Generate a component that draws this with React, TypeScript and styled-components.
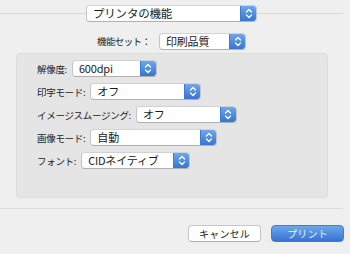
import React from "react";
import styled, { createGlobalStyle } from "styled-components";

const GlobalStyle = createGlobalStyle`
  html, body {
    margin: 0;
    padding: 0;
    background: #efefef;
  }
  body {
    font-family: "Noto Sans CJK JP", "Liberation Sans", sans-serif;
    color: #222;
  }
`;

interface PopupProps {
  value: string;
  width: number;
  big?: boolean;
}

const Chevrons: React.FC = () => (
  <svg width="8" height="11" viewBox="0 0 8 11">
    <path
      d="M1.5 4 L4 1.5 L6.5 4 M1.5 7 L4 9.5 L6.5 7"
      fill="none"
      stroke="#fff"
      strokeWidth="1.3"
      strokeLinecap="round"
      strokeLinejoin="round"
    />
  </svg>
);

const Popup: React.FC<PopupProps> = ({ value, width, big }: PopupProps) => {
  return (
    <PopupBox width={width}>
      <PopupText big={big}>{value}</PopupText>
      <PopupArrow>
        <Chevrons />
      </PopupArrow>
    </PopupBox>
  );
};

const rows = [
  { label: "解像度:", value: "600dpi", width: 85 },
  { label: "印字モード:", value: "オフ", width: 111 },
  { label: "イメージスムージング:", value: "オフ", width: 101 },
  { label: "画像モード:", value: "自動", width: 127 },
  { label: "フォント:", value: "CIDネイティブ", width: 109 },
];

const App: React.FC = () => {
  return (
    <Page>
      <GlobalStyle />
      <Header>
        <Popup value="プリンタの機能" width={171} big />
      </Header>
      <PresetRow>
        <PresetLabel>機能セット：</PresetLabel>
        <Popup value="印刷品質" width={87} />
      </PresetRow>
      <Panel>
        {rows.map((r) => (
          <Row key={r.label}>
            <Label>{r.label}</Label>
            <Popup value={r.value} width={r.width} />
          </Row>
        ))}
      </Panel>
      <Separator />
      <Footer>
        <CancelButton>キャンセル</CancelButton>
        <PrintButton>プリント</PrintButton>
      </Footer>
    </Page>
  );
};

export default App;

const Page = styled.div`
  width: 350px;
  height: 254px;
  overflow: hidden;
  background: #efefef;
`;

const Header = styled.div`
  height: 27px;
  padding-top: 5px;
  padding-left: 86px;
  box-sizing: border-box;
  background: linear-gradient(#d9d9d9, #d9d9d9) no-repeat 0 13px / 343px 1px;
`;

const PresetRow = styled.div`
  display: flex;
  align-items: center;
  height: 18px;
  margin-top: 5px;
  padding-left: 97px;
`;

const PresetLabel = styled.span`
  width: 62px;
  font-size: 9.5px;
  letter-spacing: -0.6px;
  color: #222;
`;

const Panel = styled.div`
  margin: 3px 0 0 16px;
  width: 312px;
  height: 145px;
  box-sizing: border-box;
  padding: 6px 0 0 20px;
  background: #e5e5e5;
  border: 1px solid #dddddd;
  border-radius: 4px;
  display: flex;
  flex-direction: column;
  gap: 6px;
`;

const Row = styled.div`
  display: flex;
  align-items: center;
  gap: 5px;
`;

const Label = styled.span`
  font-size: 9.5px;
  letter-spacing: -0.3px;
  color: #222;
`;

const PopupBox = styled.div<{ width: number }>`
  width: ${(p) => p.width}px;
  height: 17px;
  box-sizing: border-box;
  display: flex;
  background: #fff;
  border: 1px solid #c4c4c4;
  border-top-color: #d2d2d2;
  border-bottom-color: #b0b0b0;
  border-radius: 4px;
  overflow: hidden;
`;

const PopupText = styled.span<{ big?: boolean }>`
  flex: 1;
  padding-left: 6px;
  font-size: ${(p) => (p.big ? "11.5px" : "11px")};
  letter-spacing: -0.2px;
  line-height: 15px;
  color: #1a1a1a;
  white-space: nowrap;
`;

const PopupArrow = styled.div`
  width: 15px;
  display: flex;
  align-items: center;
  justify-content: center;
  background: linear-gradient(#6fa7ea, #3576d6);
  border-left: 1px solid #3d7bd2;
`;

const Separator = styled.div`
  margin-top: 10px;
  width: 343px;
  height: 1px;
  background: #dadada;
`;

const Footer = styled.div`
  display: flex;
  gap: 10px;
  margin-top: 16px;
  padding-left: 188px;
`;

const Button = styled.button`
  width: 73px;
  height: 17px;
  padding: 0;
  box-sizing: border-box;
  border-radius: 4px;
  font-family: inherit;
  font-size: 10px;
  line-height: 15px;
  letter-spacing: 0.2px;
`;

const CancelButton = styled(Button)`
  background: #fff;
  border: 1px solid #c6c6c6;
  border-bottom-color: #b0b0b0;
  color: #222;
`;

const PrintButton = styled(Button)`
  background: linear-gradient(#6ea6ea, #3474d4);
  border: 1px solid #3f7ed6;
  color: #e8f0fb;
`;
